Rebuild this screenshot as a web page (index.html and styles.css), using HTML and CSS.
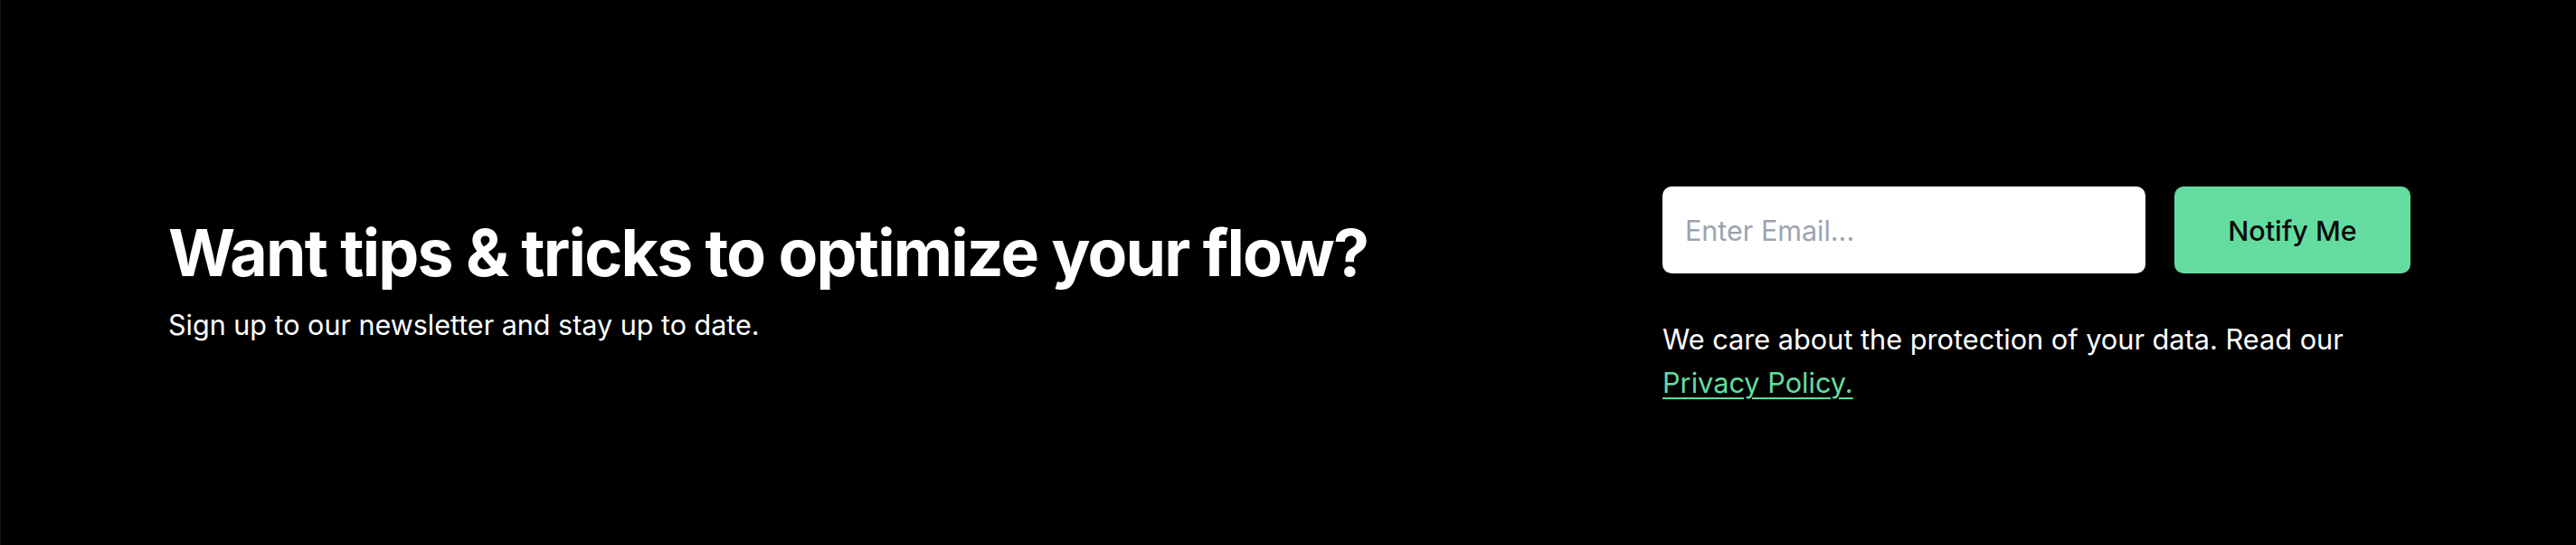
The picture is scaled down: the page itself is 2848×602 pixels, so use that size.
FILE: index.html
```html
<!DOCTYPE html>
<html lang="en">
<head>
<meta charset="utf-8">
<title>Newsletter</title>
<link rel="stylesheet" href="styles.css">
</head>
<body>
<section class="newsletter">
  <div class="intro">
    <h2 class="title">Want tips &amp; tricks to optimize your flow?</h2>
    <p class="lead">Sign up to our newsletter and stay up to date.</p>
  </div>
  <div class="signup">
    <form class="form" onsubmit="return false;">
      <input class="email" type="email" placeholder="Enter Email...">
      <button class="notify" type="submit">Notify Me</button>
    </form>
    <p class="privacy">We care about the protection of your data. Read our <a class="policy" href="#">Privacy Policy.</a></p>
  </div>
</section>
</body>
</html>
```
FILE: styles.css
```css
html, body {
  margin: 0;
  padding: 0;
  background: #000;
}
body {
  font-family: Inter, "Noto Sans", "Liberation Sans", sans-serif;
  color: #fff;
  height: 602px;
  border-left: 1px solid #161616;
  box-sizing: border-box;
}
.newsletter {
  display: flex;
  justify-content: space-between;
  align-items: flex-start;
  padding: 206px 183px 0 185px;
}
.intro {
  padding-top: 33px;
}
.title {
  margin: 0;
  font-size: 71.5px;
  line-height: 80px;
  font-weight: 700;
  letter-spacing: -0.025em;
}
.lead {
  margin: 20px 0 0;
  font-size: 30.5px;
  line-height: 40px;
}
.signup {
  width: 827px;
}
.form {
  display: flex;
  gap: 32px;
  margin: 0;
}
.email {
  flex: 1;
  min-width: 0;
  height: 96px;
  box-sizing: border-box;
  border: none;
  border-radius: 10px;
  background: #fff;
  padding: 0 25px;
  font-family: inherit;
  font-size: 30.5px;
  color: #111;
  outline: none;
}
.email::placeholder {
  color: #9ca3af;
}
.notify {
  flex: 0 0 261px;
  width: 261px;
  height: 96px;
  border: none;
  border-radius: 10px;
  background: #64dca0;
  color: #0a0a0a;
  font-family: inherit;
  font-size: 30.5px;
  font-weight: 500;
}
.privacy {
  margin: 49px 0 0;
  font-size: 30.7px;
  line-height: 48px;
}
.policy {
  color: #64dca0;
  text-decoration: underline;
  text-underline-offset: 5px;
  text-decoration-thickness: 2px;
}
```
